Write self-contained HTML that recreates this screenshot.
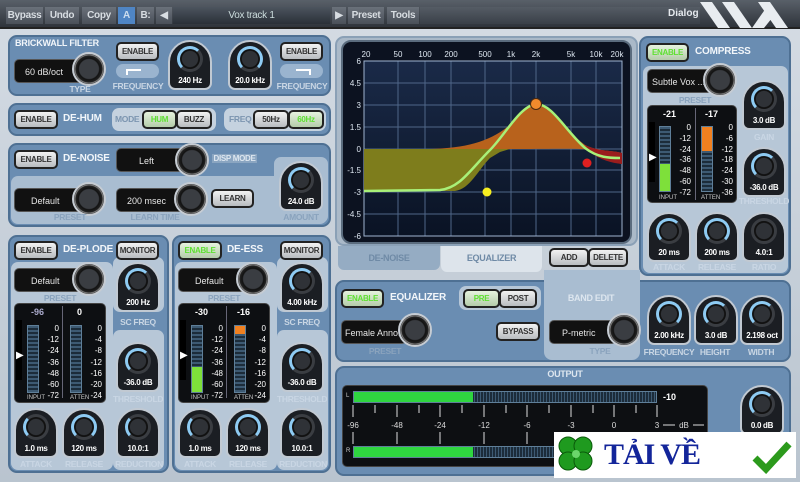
<!DOCTYPE html>
<html><head><meta charset="utf-8"><style>
*{box-sizing:border-box;margin:0;padding:0}
body{width:800px;height:482px;overflow:hidden;position:relative;background:linear-gradient(#d5dce4,#b9c4cf);font-family:"Liberation Sans",sans-serif;}
div,span{position:absolute;white-space:nowrap}
.tb{left:0;top:0;width:800px;height:29px;background:linear-gradient(#596069,#2f343b);border-bottom:2px solid #222}
.tbb{top:7px;height:17px;background:linear-gradient(#6a717a,#4a5059);color:#d8dde2;font-weight:bold;font-size:10px;letter-spacing:-0.3px;line-height:17px;text-align:center}
.p{background:#6a8db2;border:2px solid #4e7093;border-radius:9px}
.in{background:#a9bdd1;border-radius:7px}
.bt{height:19px;background:linear-gradient(#f2f2f2,#b8bcc0);border:2px solid #222;border-radius:5px;font-weight:bold;font-size:8px;letter-spacing:-0.3px;line-height:15px;text-align:center;color:#333}
.g{color:#5fe033;background:linear-gradient(#e6f2de,#b4ccaa)}
.t{font-weight:bold;color:#f2f6fa;font-size:10px;letter-spacing:-0.2px}
.l{font-weight:bold;color:#c9d6e4;font-size:8.5px;letter-spacing:-0.3px;text-align:center}
.dd{height:24px;background:#111;border-radius:5px;color:#e6e6e6;font-size:9px;line-height:24px;padding-left:10px;border:1px solid #555;overflow:hidden}
.dk{width:34px;height:34px;border-radius:50%;background:radial-gradient(#3a3d42 45%,#111 50%,#222 62%,#888 66%,#222 72%);border:2px solid #c6ccd3}
.kn{width:44px;height:50px;background:#1b1e23;border-radius:22px 22px 7px 7px;border:2px solid #c1c9d2}
.kn i{position:absolute;left:7px;top:4px;width:26px;height:26px;border-radius:50%;border:3px solid #3a3d42;border-left-color:#8ecbf3;border-top-color:#8ecbf3;background:radial-gradient(#2f3237 55%,#111 60%)}
.kn b{position:absolute;left:0;right:0;bottom:3px;text-align:center;color:#fff;font-size:8px;letter-spacing:-0.3px;font-weight:bold}
.m{background:#0d0f12;border-radius:5px;border:1px solid #444}
.bar{background:repeating-linear-gradient(#3d5a73 0 2px,#1c2c3a 2px 4px);border:1px solid #5f7f99}
.sc{color:#fff;font-size:8px;text-align:right;width:18px;line-height:11.2px;white-space:normal}
.ml{color:#ccc;font-size:6px}
</style></head><body>
<div class="tb">
<div class="tbb" style="left:6px;width:37px">Bypass</div>
<div class="tbb" style="left:45px;width:34px">Undo</div>
<div class="tbb" style="left:82px;width:34px">Copy</div>
<div class="tbb" style="left:118px;width:17px;background:#4f85c4;color:#cde">A</div>
<div class="tbb" style="left:137px;width:17px">B:</div>
<div class="tbb" style="left:156px;width:16px">◀</div>
<div class="tbb" style="left:173px;width:157px;background:linear-gradient(#4c545e,#2a3038);color:#cdd;font-weight:normal">Vox track 1</div>
<div class="tbb" style="left:332px;width:14px">▶</div>
<div class="tbb" style="left:348px;width:36px">Preset</div>
<div class="tbb" style="left:387px;width:32px">Tools</div>
<div class="tbb" style="left:420px;width:280px;background:linear-gradient(#555c65,#3a4048)"></div>
<span style="left:668px;top:8px;color:#e5e9ee;font-size:10px;font-weight:bold">Dialog</span>
<svg style="position:absolute;left:700px;top:2px" width="100" height="26"><g fill="#e8ecf0"><polygon points="0,0 12,0 30,26 18,26"/><polygon points="22,0 34,0 52,26 40,26"/><polygon points="58,0 70,0 88,26 76,26"/><polygon points="52,26 66,6 72,16 64,26"/></g></svg>
</div>

<!-- Brickwall -->
<div class="p" style="left:8px;top:35px;width:323px;height:61px"></div>
<span class="t" style="left:15px;top:38px;font-size:9px">BRICKWALL FILTER</span>
<div class="dd" style="left:14px;top:59px;width:70px">60 dB/oct</div>
<div class="dk" style="left:72px;top:52px"></div>
<span class="l" style="left:50px;top:84px;width:60px">TYPE</span>
<div class="bt" style="left:116px;top:42px;width:43px">ENABLE</div>
<div class="in" style="left:116px;top:64px;width:43px;height:14px;background:#9ab4cf"><span style="left:10px;top:5px;width:15px;height:6px;border-left:2px solid #fff;border-top:2px solid #fff"></span></div>
<span class="l" style="left:110px;top:81px;width:56px">FREQUENCY</span>
<div class="kn" style="left:168px;top:40px"><i></i><b>240 Hz</b></div>
<div class="kn" style="left:228px;top:40px"><i style="border-right-color:#8ecbf3"></i><b>20.0 kHz</b></div>
<div class="bt" style="left:280px;top:42px;width:43px">ENABLE</div>
<div class="in" style="left:280px;top:64px;width:43px;height:14px;background:#9ab4cf"><span style="left:16px;top:5px;width:15px;height:6px;border-right:2px solid #fff;border-top:2px solid #fff"></span></div>
<span class="l" style="left:274px;top:81px;width:56px">FREQUENCY</span>

<!-- De-hum -->
<div class="p" style="left:8px;top:103px;width:323px;height:33px"></div>
<div class="bt" style="left:14px;top:110px;width:44px">ENABLE</div>
<span class="t" style="left:63px;top:113px">DE-HUM</span>
<div class="in" style="left:112px;top:108px;width:104px;height:23px;background:#c5d2df"></div>
<span class="l" style="left:115px;top:114px;color:#7c95b0">MODE</span>
<div class="bt g" style="left:142px;top:110px;width:35px">HUM</div>
<div class="bt" style="left:176px;top:110px;width:36px">BUZZ</div>
<div class="in" style="left:224px;top:108px;width:102px;height:23px;background:#c5d2df"></div>
<span class="l" style="left:229px;top:114px;color:#7c95b0">FREQ</span>
<div class="bt" style="left:253px;top:110px;width:36px">50Hz</div>
<div class="bt g" style="left:288px;top:110px;width:36px">60Hz</div>

<!-- De-noise -->
<div class="p" style="left:8px;top:143px;width:323px;height:84px"></div>
<div class="in" style="left:11px;top:176px;width:316px;height:48px"></div>
<div class="in" style="left:274px;top:157px;width:54px;height:66px"></div>
<div class="bt" style="left:14px;top:150px;width:44px">ENABLE</div>
<span class="t" style="left:63px;top:153px">DE-NOISE</span>
<div class="dd" style="left:116px;top:148px;width:70px;padding-left:22px">Left</div>
<div class="dk" style="left:175px;top:143px"></div>
<span class="l" style="left:212px;top:154px;width:45px;background:#8aa5c1;color:#dde6ef;font-size:8px">DISP MODE</span>
<div class="dd" style="left:14px;top:188px;width:70px;padding-left:16px">Default</div>
<div class="dk" style="left:72px;top:182px"></div>
<span class="l" style="left:40px;top:212px;width:60px;color:#8aa3bd">PRESET</span>
<div class="dd" style="left:116px;top:188px;width:70px">200 msec</div>
<div class="dk" style="left:174px;top:182px"></div>
<span class="l" style="left:125px;top:212px;width:60px;color:#8aa3bd">LEARN TIME</span>
<div class="bt" style="left:211px;top:189px;width:43px">LEARN</div>
<div class="kn" style="left:279px;top:161px"><i></i><b>24.0 dB</b></div>
<span class="l" style="left:276px;top:212px;width:50px;color:#8aa3bd">AMOUNT</span>

<!-- De-plode & De-ess -->
<div class="p" style="left:8px;top:235px;width:161px;height:238px"></div>
<div class="p" style="left:172px;top:235px;width:159px;height:238px"></div>
<div class="in" style="left:11px;top:262px;width:102px;height:208px;background:#b7c7d7"></div>
<div class="in" style="left:113px;top:257px;width:51px;height:55px;background:#b7c7d7"></div>
<div class="in" style="left:113px;top:330px;width:51px;height:140px;background:#b7c7d7"></div>
<div class="in" style="left:175px;top:262px;width:102px;height:208px;background:#b7c7d7"></div>
<div class="in" style="left:277px;top:257px;width:51px;height:55px;background:#b7c7d7"></div>
<div class="in" style="left:277px;top:330px;width:51px;height:140px;background:#b7c7d7"></div>

<div class="bt" style="left:14px;top:241px;width:44px">ENABLE</div>
<span class="t" style="left:63px;top:244px">DE-PLODE</span>
<div class="bt" style="left:116px;top:241px;width:43px">MONITOR</div>
<div class="dd" style="left:14px;top:268px;width:68px;padding-left:16px">Default</div>
<div class="dk" style="left:72px;top:262px"></div>
<span class="l" style="left:30px;top:293px;width:60px;color:#8aa3bd">PRESET</span>
<div class="kn" style="left:116px;top:262px"><i></i><b>200 Hz</b></div>
<span class="l" style="left:113px;top:317px;width:50px">SC FREQ</span>
<div class="m" style="left:14px;top:303px;width:92px;height:100px"></div>
<span style="left:16px;top:320px;width:6px;height:60px;background:#000"></span>
<span style="left:16px;top:350px;color:#fff;font-size:10px">▶</span>
<span style="left:31px;top:307px;color:#aac;font-size:9px;font-weight:bold">-96</span>
<span style="left:77px;top:307px;color:#fff;font-size:9px;font-weight:bold">0</span>
<div class="bar" style="left:27px;top:325px;width:12px;height:68px"></div>
<div class="bar" style="left:70px;top:325px;width:12px;height:68px"></div>
<span class="sc" style="left:41px;top:323px">0<br>-12<br>-24<br>-36<br>-48<br>-60<br>-72</span>
<span class="sc" style="left:84px;top:323px">0<br>-4<br>-8<br>-12<br>-16<br>-20<br>-24</span>
<span class="ml" style="left:27px;top:395px">INPUT</span><span class="ml" style="left:70px;top:395px">ATTEN</span>
<span style="left:62px;top:306px;width:1px;height:92px;background:#667"></span>
<div class="kn" style="left:116px;top:342px"><i></i><b>-36.0 dB</b></div>
<span class="l" style="left:113px;top:394px;width:50px">THRESHOLD</span>
<div class="kn" style="left:14px;top:408px"><i style="border-top-color:#3a3d42"></i><b>1.0 ms</b></div>
<div class="kn" style="left:62px;top:408px"><i style="border-right-color:#8ecbf3"></i><b>120 ms</b></div>
<div class="kn" style="left:116px;top:408px"><i style="border-top-color:#3a3d42"></i><b>10.0:1</b></div>
<span class="l" style="left:12px;top:459px;width:48px">ATTACK</span>
<span class="l" style="left:60px;top:459px;width:48px">RELEASE</span>
<span class="l" style="left:112px;top:459px;width:54px">REDUCTION</span>

<div class="bt g" style="left:178px;top:241px;width:44px">ENABLE</div>
<span class="t" style="left:227px;top:244px">DE-ESS</span>
<div class="bt" style="left:280px;top:241px;width:43px">MONITOR</div>
<div class="dd" style="left:178px;top:268px;width:68px;padding-left:16px">Default</div>
<div class="dk" style="left:236px;top:262px"></div>
<span class="l" style="left:194px;top:293px;width:60px;color:#8aa3bd">PRESET</span>
<div class="kn" style="left:280px;top:262px"><i></i><b>4.00 kHz</b></div>
<span class="l" style="left:277px;top:317px;width:50px">SC FREQ</span>
<div class="m" style="left:178px;top:303px;width:92px;height:100px"></div>
<span style="left:180px;top:320px;width:6px;height:60px;background:#000"></span>
<span style="left:180px;top:350px;color:#fff;font-size:10px">▶</span>
<span style="left:195px;top:307px;color:#fff;font-size:9px;font-weight:bold">-30</span>
<span style="left:237px;top:307px;color:#fff;font-size:9px;font-weight:bold">-16</span>
<div class="bar" style="left:191px;top:325px;width:12px;height:68px"></div>
<span style="left:192px;top:367px;width:10px;height:25px;background:#7ee03a"></span>
<div class="bar" style="left:234px;top:325px;width:12px;height:68px"></div>
<span style="left:235px;top:326px;width:10px;height:8px;background:#f08020"></span>
<span class="sc" style="left:205px;top:323px">0<br>-12<br>-24<br>-36<br>-48<br>-60<br>-72</span>
<span class="sc" style="left:248px;top:323px">0<br>-4<br>-8<br>-12<br>-16<br>-20<br>-24</span>
<span class="ml" style="left:191px;top:395px">INPUT</span><span class="ml" style="left:234px;top:395px">ATTEN</span>
<span style="left:226px;top:306px;width:1px;height:92px;background:#667"></span>
<div class="kn" style="left:280px;top:342px"><i></i><b>-36.0 dB</b></div>
<span class="l" style="left:277px;top:394px;width:50px">THRESHOLD</span>
<div class="kn" style="left:178px;top:408px"><i style="border-top-color:#3a3d42"></i><b>1.0 ms</b></div>
<div class="kn" style="left:226px;top:408px"><i style="border-right-color:#8ecbf3"></i><b>120 ms</b></div>
<div class="kn" style="left:280px;top:408px"><i style="border-top-color:#3a3d42"></i><b>10.0:1</b></div>
<span class="l" style="left:176px;top:459px;width:48px">ATTACK</span>
<span class="l" style="left:224px;top:459px;width:48px">RELEASE</span>
<span class="l" style="left:276px;top:459px;width:54px">REDUCTION</span>

<!-- EQ display -->
<div class="p" style="left:335px;top:36px;width:303px;height:210px;background:#aab9c8;border-color:#8aa0b6"></div>
<div style="left:341px;top:40px;width:291px;height:204px;background:#0c1220;border-radius:10px;border:2px solid #5b6c7e"></div>
<svg style="position:absolute;left:0;top:0" width="800" height="482">
<defs><linearGradient id="bg" x1="0" y1="0" x2="0" y2="1"><stop offset="0" stop-color="#1a2a48"/><stop offset="1" stop-color="#0a1324"/></linearGradient></defs>
<rect x="364" y="61" width="258" height="175" fill="url(#bg)"/>
<g stroke="#4f6688" stroke-width="1">
<line x1="398" y1="61" x2="398" y2="236"/><line x1="425" y1="61" x2="425" y2="236"/><line x1="451" y1="61" x2="451" y2="236"/><line x1="485" y1="61" x2="485" y2="236"/><line x1="511" y1="61" x2="511" y2="236"/><line x1="536" y1="61" x2="536" y2="236"/><line x1="571" y1="61" x2="571" y2="236"/><line x1="596" y1="61" x2="596" y2="236"/>
<line x1="364" y1="83" x2="622" y2="83"/><line x1="364" y1="105" x2="622" y2="105"/><line x1="364" y1="127" x2="622" y2="127"/><line x1="364" y1="149" x2="622" y2="149"/><line x1="364" y1="170" x2="622" y2="170"/><line x1="364" y1="192" x2="622" y2="192"/><line x1="364" y1="214" x2="622" y2="214"/>
</g>
<rect x="364" y="61" width="258" height="175" fill="none" stroke="#9fb4d0"/>
<path d="M364,149 L455,149 L455,191 L364,191Z" fill="#7e7d1c"/>
<path d="M455,149 L455,191 C470,189 478,170 490,158 L500,152 L510,149Z" fill="#7e7d1c"/>
<path d="M430,149 C470,148 495,140 515,120 C525,108 530,104 536,104 C550,106 565,130 585,145 C600,152 612,150 622,153 L622,164 C610,162 600,158 590,150 C580,148 560,149 510,149Z" fill="#b8621c"/>
<path d="M585,145 C600,152 612,150 622,153 L622,164 C612,163 600,160 590,152Z" fill="#9a1d1d"/>
<path d="M364,191 L440,190 C460,188 470,170 490,150 C505,135 520,106 536,104 C552,104 565,130 585,148 C598,158 610,158 620,158" fill="none" stroke="#a8f078" stroke-width="2.5"/>
<circle cx="536" cy="104" r="5.5" fill="#f08a2c" stroke="#4a2a10"/>
<circle cx="487" cy="192" r="4.5" fill="#f6ee20"/>
<circle cx="587" cy="163" r="4.5" fill="#e02020"/>
<g fill="#dde6f0" font-size="8" font-family="Liberation Sans" text-anchor="middle">
<text x="366" y="57">20</text><text x="398" y="57">50</text><text x="425" y="57">100</text><text x="451" y="57">200</text><text x="485" y="57">500</text><text x="511" y="57">1k</text><text x="536" y="57">2k</text><text x="571" y="57">5k</text><text x="596" y="57">10k</text><text x="617" y="57">20k</text>
</g>
<g fill="#dde6f0" font-size="8" font-family="Liberation Sans" text-anchor="end">
<text x="361" y="64">6</text><text x="361" y="86">4.5</text><text x="361" y="108">3</text><text x="361" y="130">1.5</text><text x="361" y="152">0</text><text x="361" y="173">-1.5</text><text x="361" y="195">-3</text><text x="361" y="217">-4.5</text><text x="361" y="239">-6</text>
</g>
</svg>
<div style="left:338px;top:246px;width:102px;height:24px;background:#95acc3;border-radius:0 0 6px 6px"></div>
<span class="l" style="left:338px;top:253px;width:102px;color:#6f8aa6;font-size:9px">DE-NOISE</span>
<div style="left:441px;top:246px;width:101px;height:26px;background:#dde4eb;border-radius:0 0 6px 6px"></div>
<span class="l" style="left:441px;top:253px;width:101px;color:#6f8aa6;font-size:9px">EQUALIZER</span>
<div class="bt" style="left:549px;top:248px;width:40px">ADD</div>
<div class="bt" style="left:588px;top:248px;width:40px">DELETE</div>

<!-- Compress -->
<div class="p" style="left:639px;top:36px;width:152px;height:240px"></div>
<div class="in" style="left:643px;top:66px;width:145px;height:207px;background:#b7c7d7"></div>
<div class="bt g" style="left:646px;top:43px;width:43px">ENABLE</div>
<span class="t" style="left:695px;top:46px">COMPRESS</span>
<div class="dd" style="left:647px;top:69px;width:66px;padding-left:4px">Subtle Vox ...</div>
<div class="dk" style="left:703px;top:63px"></div>
<span class="l" style="left:665px;top:95px;width:60px;color:#8aa3bd">PRESET</span>
<div class="kn" style="left:742px;top:80px"><i></i><b>3.0 dB</b></div>
<span class="l" style="left:740px;top:132px;width:48px">GAIN</span>
<div class="m" style="left:647px;top:105px;width:90px;height:98px"></div>
<span style="left:649px;top:122px;width:6px;height:60px;background:#000"></span>
<span style="left:649px;top:152px;color:#fff;font-size:10px">▶</span>
<span style="left:663px;top:109px;color:#fff;font-size:9px;font-weight:bold">-21</span>
<span style="left:705px;top:109px;color:#fff;font-size:9px;font-weight:bold">-17</span>
<div class="bar" style="left:659px;top:126px;width:12px;height:66px"></div>
<span style="left:660px;top:164px;width:10px;height:27px;background:#7ee03a"></span>
<div class="bar" style="left:701px;top:126px;width:12px;height:66px"></div>
<span style="left:702px;top:127px;width:10px;height:24px;background:#f08020"></span>
<span class="sc" style="left:673px;top:123px;line-height:10.8px">0<br>-12<br>-24<br>-36<br>-48<br>-60<br>-72</span>
<span class="sc" style="left:715px;top:123px;line-height:10.8px">0<br>-6<br>-12<br>-18<br>-24<br>-30<br>-36</span>
<span class="ml" style="left:659px;top:195px">INPUT</span><span class="ml" style="left:701px;top:195px">ATTEN</span>
<span style="left:695px;top:108px;width:1px;height:92px;background:#667"></span>
<div class="kn" style="left:742px;top:147px"><i></i><b>-36.0 dB</b></div>
<span class="l" style="left:737px;top:196px;width:54px">THRESHOLD</span>
<div class="kn" style="left:647px;top:212px"><i></i><b>20 ms</b></div>
<div class="kn" style="left:695px;top:212px"><i style="border-right-color:#8ecbf3"></i><b>200 ms</b></div>
<div class="kn" style="left:742px;top:212px"><i style="border-top-color:#3a3d42;border-left-color:#3a3d42"></i><b>4.0:1</b></div>
<span class="l" style="left:645px;top:262px;width:48px">ATTACK</span>
<span class="l" style="left:693px;top:262px;width:48px">RELEASE</span>
<span class="l" style="left:740px;top:262px;width:48px">RATIO</span>

<!-- Equalizer / Band edit -->
<div class="p" style="left:335px;top:280px;width:456px;height:82px"></div>
<div style="left:544px;top:270px;width:96px;height:90px;background:#a9bdd1;border-radius:0 0 8px 8px"></div>
<div class="bt g" style="left:341px;top:289px;width:43px">ENABLE</div>
<span class="t" style="left:390px;top:292px">EQUALIZER</span>
<div class="in" style="left:459px;top:286px;width:82px;height:24px;background:#b7c7d7"></div>
<div class="bt g" style="left:463px;top:289px;width:37px">PRE</div>
<div class="bt" style="left:499px;top:289px;width:38px">POST</div>
<span class="l" style="left:556px;top:293px;width:70px;color:#dde6ef;font-size:9px">BAND EDIT</span>
<div class="dd" style="left:341px;top:320px;width:66px;padding-left:3px">Female Anno...</div>
<div class="dk" style="left:398px;top:313px"></div>
<span class="l" style="left:355px;top:346px;width:60px;color:#8aa3bd">PRESET</span>
<div class="bt" style="left:496px;top:322px;width:44px">BYPASS</div>
<div class="dd" style="left:549px;top:320px;width:68px;padding-left:12px">P-metric</div>
<div class="dk" style="left:607px;top:313px"></div>
<span class="l" style="left:575px;top:346px;width:50px;color:#8aa3bd">TYPE</span>
<div class="kn" style="left:647px;top:295px"><i style="border-right-color:#8ecbf3"></i><b>2.00 kHz</b></div>
<div class="kn" style="left:694px;top:295px"><i></i><b>3.0 dB</b></div>
<div class="kn" style="left:740px;top:295px"><i></i><b>2.198 oct</b></div>
<span class="l" style="left:643px;top:347px;width:52px">FREQUENCY</span>
<span class="l" style="left:691px;top:347px;width:48px">HEIGHT</span>
<span class="l" style="left:737px;top:347px;width:48px">WIDTH</span>

<!-- Output -->
<div class="p" style="left:335px;top:366px;width:456px;height:110px"></div>
<span class="l" style="left:535px;top:369px;width:60px;color:#dde6ef;font-size:9px">OUTPUT</span>
<div class="m" style="left:342px;top:385px;width:366px;height:82px"></div>
<div class="bar" style="left:353px;top:391px;width:304px;height:12px;background:repeating-linear-gradient(90deg,#3d5a73 0 1px,#1c2c3a 1px 3px)"></div>
<span style="left:354px;top:392px;width:119px;height:10px;background:#2fd640"></span>
<div class="bar" style="left:353px;top:446px;width:304px;height:12px;background:repeating-linear-gradient(90deg,#3d5a73 0 1px,#1c2c3a 1px 3px)"></div>
<span style="left:354px;top:447px;width:119px;height:10px;background:#2fd640"></span>
<span style="left:346px;top:393px;color:#ccc;font-size:6px">L</span><span style="left:346px;top:448px;color:#ccc;font-size:6px">R</span>
<span style="left:663px;top:392px;color:#fff;font-size:9px;font-weight:bold">-10</span>
<svg style="position:absolute;left:0;top:0" width="800" height="482"><g stroke="#ddd"><line x1="353" y1="405" x2="353" y2="417"/><line x1="375" y1="405" x2="375" y2="413"/><line x1="397" y1="405" x2="397" y2="417"/><line x1="419" y1="405" x2="419" y2="413"/><line x1="440" y1="405" x2="440" y2="417"/><line x1="462" y1="405" x2="462" y2="413"/><line x1="484" y1="405" x2="484" y2="417"/><line x1="506" y1="405" x2="506" y2="413"/><line x1="527" y1="405" x2="527" y2="417"/><line x1="549" y1="405" x2="549" y2="413"/><line x1="571" y1="405" x2="571" y2="417"/><line x1="593" y1="405" x2="593" y2="413"/><line x1="614" y1="405" x2="614" y2="417"/><line x1="636" y1="405" x2="636" y2="413"/><line x1="657" y1="405" x2="657" y2="417"/><line x1="663" y1="425" x2="675" y2="425"/><line x1="693" y1="425" x2="704" y2="425"/><line x1="353" y1="432" x2="353" y2="444"/><line x1="397" y1="432" x2="397" y2="444"/><line x1="440" y1="432" x2="440" y2="444"/><line x1="484" y1="432" x2="484" y2="444"/><line x1="527" y1="432" x2="527" y2="444"/></g>
<g fill="#ddd" font-size="8" font-family="Liberation Sans" text-anchor="middle"><text x="353" y="428">-96</text><text x="397" y="428">-48</text><text x="440" y="428">-24</text><text x="484" y="428">-12</text><text x="527" y="428">-6</text><text x="571" y="428">-3</text><text x="614" y="428">0</text><text x="657" y="428">3</text><text x="684" y="428">dB</text></g></svg>
<div class="kn" style="left:740px;top:385px"><i></i><b>0.0 dB</b></div>

<!-- watermark -->
<div style="left:554px;top:432px;width:242px;height:46px;background:#fff"></div>
<svg style="position:absolute;left:556px;top:434px" width="40" height="42"><g fill="#1f9a1f" stroke="#0a5a0a"><circle cx="12" cy="12" r="9"/><circle cx="27" cy="12" r="9"/><circle cx="12" cy="27" r="9"/><circle cx="27" cy="27" r="9"/></g><circle cx="20" cy="20" r="4" fill="#6bd66b"/></svg>
<span style="left:604px;top:435px;color:#13259a;font-size:30px;font-family:'Liberation Serif',serif;font-weight:bold;line-height:40px;letter-spacing:-1px">TẢI VỀ</span>
<svg style="position:absolute;left:752px;top:438px" width="40" height="36"><path d="M3,20 L14,31 L37,6" fill="none" stroke="#2c9a1c" stroke-width="7"/></svg>
</body></html>
